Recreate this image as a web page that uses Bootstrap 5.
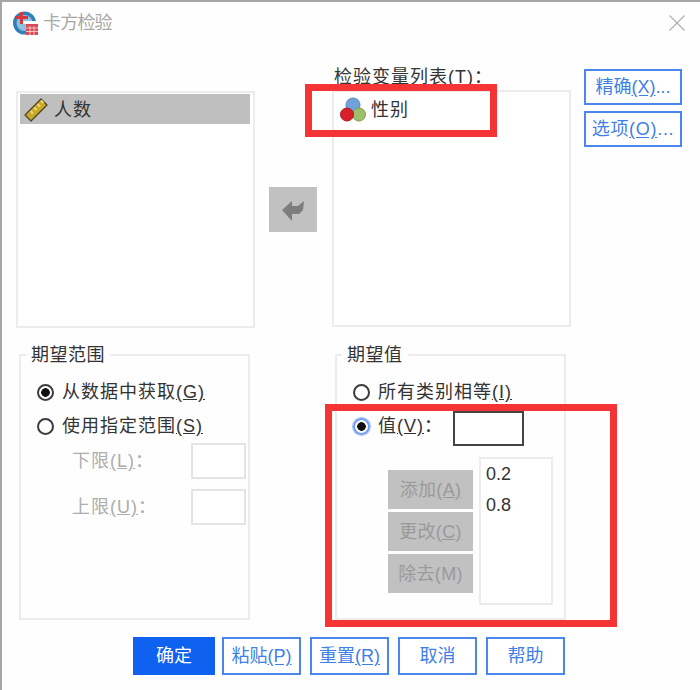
<!DOCTYPE html>
<html lang="zh">
<head>
<meta charset="utf-8">
<title>卡方检验</title>
<link rel="stylesheet" href="https://cdn.jsdelivr.net/npm/bootstrap@5.3.0/dist/css/bootstrap.min.css">
<style>
html,body{background:#fff;margin:0;height:690px;overflow:hidden}
body{font-family:"Liberation Sans","Noto Sans CJK SC",sans-serif;font-size:18px;color:#333;line-height:24px}
.dlg{position:relative;width:700px;height:690px;border-top:2px solid #a6a6a6;border-left:2px solid #a6a6a6;background:#fefefe}
.tbar{height:42px;padding-left:11px;padding-right:15px;color:#a8a8a8;letter-spacing:-.8px;font-size:18px}
.tbar .ttl{margin-left:5px}
.upper{height:299px}
.lst{border:2px solid #ececec;background:#fff;width:239px;height:237px;padding:1px 3px 3px 2px}
.sel{background:#bfbfbf;height:30px;padding-left:3px;gap:5px;letter-spacing:1px;color:#333}
.sel span{margin-top:1px}
.upper .col-l{margin-left:14px;margin-top:47px}
.mover{width:48px;height:45px;margin:143px 15px 0 14px;background:#c1c1c1;border:0;border-radius:0;padding:0}
.lbl{height:25px;letter-spacing:1px;margin-left:2px;margin-top:21px;margin-bottom:0;white-space:nowrap;color:#333}
.var{height:34px;padding-left:4px;gap:5px;letter-spacing:1px;color:#333;margin-top:0}
.side{margin-left:13px;margin-top:25px;gap:6px}
.bt{border:2px solid #4a86ec;border-radius:0;background:#fff;color:#3f7fe8;font-size:18px;line-height:22px;padding:0;white-space:nowrap}
.bt:hover{background:#fff;color:#3f7fe8;border-color:#4a86ec}
.bt u{text-underline-offset:2px}
.side .bt{width:98px;height:36px}
.side .wide{letter-spacing:.7px}
.lower{height:294px;padding-left:17px;gap:85px}
.grp{width:231px;height:277px;border:2px solid #ececec;margin:0;padding:0 0 0 16px;min-width:0}
.grp legend{float:none;width:auto;font-size:18px;line-height:24px;margin:0 0 8px -11px;padding:0 5px;letter-spacing:.5px;color:#333;height:24px}
.rw{height:34px;gap:8px;letter-spacing:1px;white-space:nowrap;color:#333}
.rad{width:17px;height:17px;margin:0;flex:none;border:2px solid #3c3c3c;border-radius:50%;appearance:none;background:#fff}
.rad:checked{background:radial-gradient(circle,#111 0 4px,#fff 4.6px)}
.rad.foc{border-color:#6f9fee;box-shadow:0 0 0 1px #a8c5f4}
.off{color:#adadad;letter-spacing:1px}
.bx{border:2px solid #e4e4e4;background:#fff;height:36px;width:55px;border-radius:0;padding:0;display:block}
.lim{height:46px;padding-left:35px;padding-right:2px}
.lim.first{margin-top:-5px}
.bx.act{border-color:#444;width:71px;height:35px;margin-left:2px;margin-top:5px}
.pick{width:85px;gap:3px;margin-top:27px;margin-left:35px}
.grey{background:#c1c1c1;color:#9a9a9a;border:0;border-radius:0;height:39px;font-size:18px;padding:0;white-space:nowrap;line-height:22px;letter-spacing:.3px}
.grey:disabled{background:#c1c1c1;color:#9a9a9a;opacity:1}
.vals{width:74px;height:148px;border:2px solid #ececec;background:#fff;padding:0 0 0 5px;line-height:31px;margin:14px 0 0 6px;color:#333}
.foot{padding-left:131px;gap:9px}
.foot .bt{height:38px;width:79px}
.foot .pri{width:82px;background:#0f62f0;border-color:#0f62f0;color:#fff;margin-right:-2px}
.foot .pri:hover{background:#0f62f0;border-color:#0f62f0;color:#fff}
.rbox{position:absolute;border:7px solid #f53535;pointer-events:none}
.rb1{left:303px;top:82px;width:192px;height:53px}
.rb2{left:323px;top:402px;width:292px;height:223px}
.xicon{width:16px;height:16px}
</style>
</head>
<body>
<div class="dlg">
  <div class="tbar d-flex align-items-center">
    <svg width="25" height="25" viewBox="0 0 25 25" aria-hidden="true">
      <circle cx="11.5" cy="12" r="11.5" fill="#2f7fb8"/>
      <circle cx="11.5" cy="12" r="8" fill="#8fbfe0"/>
      <rect x="10" y="10" width="13" height="3" fill="#fff"/>
      <rect x="7" y="1" width="3" height="12" fill="#d9363e"/>
      <rect x="2" y="5" width="13" height="3" fill="#d9363e"/>
      <rect x="13" y="13" width="12" height="11" fill="#d84a56"/>
      <path d="M13 17h12M13 20.500h12M17 15v9M21 15v9" stroke="#f3c0c4" stroke-width="1"/>
    </svg>
    <span class="ttl">卡方检验</span>
    <svg class="xicon ms-auto" viewBox="0 0 16 16" aria-hidden="true"><path d="M.5.5l15 15M15.500.5l-15 15" stroke="#b0b0b0" stroke-width="1.200" fill="none"/></svg>
  </div>

  <div class="upper d-flex align-items-start">
    <div class="col-l">
      <div class="lst">
        <div class="sel d-flex align-items-center">
          <svg width="26" height="26" viewBox="0 0 26 26" aria-hidden="true">
            <path d="M2 19L18 3l6 6L8 25z" fill="#c9a92a" stroke="#4e4620" stroke-width="1.300" stroke-linejoin="round"/>
            <path d="M7.500 15l2.500 2.500M11 11.500l2.500 2.500M14.500 8l2.500 2.500M18 4.500l2.500 2.500" stroke="#e8dc70" stroke-width="2"/>
          </svg>
          <span>人数</span>
        </div>
      </div>
    </div>
    <button class="btn mover d-flex align-items-center justify-content-center" type="button" aria-label="移动">
      <svg width="26" height="24" viewBox="0 0 26 24" aria-hidden="true"><path d="M2 12l10-9v5h6l6-5-1 9-4 4h-7v7z" fill="#7d7d7d"/></svg>
    </button>
    <div>
      <div class="lbl">检验变量列表<u>(T)</u>：</div>
      <div class="lst">
        <div class="var d-flex align-items-center">
          <svg width="26" height="26" viewBox="0 0 26 26" aria-hidden="true">
            <circle cx="13" cy="8" r="7" fill="#6ea3dc" stroke="#5a85b8"/>
            <circle cx="19" cy="17.500" r="6.500" fill="#9cc06a" stroke="#7b9c50"/>
            <circle cx="7" cy="17.500" r="6.500" fill="#d8202a" stroke="#a81a20"/>
          </svg>
          <span>性别</span>
        </div>
      </div>
    </div>
    <div class="side d-flex flex-column">
      <button class="btn bt" type="button">精确<u>(X)</u>...</button>
      <button class="btn bt wide" type="button">选项<u>(O)</u>...</button>
    </div>
  </div>

  <div class="lower d-flex align-items-start">
    <fieldset class="grp">
      <legend>期望范围</legend>
      <div class="rw d-flex align-items-center"><input class="rad" type="radio" name="r1" checked aria-label="从数据中获取"><span>从数据中获取<u>(G)</u></span></div>
      <div class="rw d-flex align-items-center"><input class="rad" type="radio" name="r1" aria-label="使用指定范围"><span>使用指定范围<u>(S)</u></span></div>
      <div class="lim first d-flex align-items-center justify-content-between"><span class="off">下限<u>(L)</u>：</span><input class="bx" disabled aria-label="下限"></div>
      <div class="lim d-flex align-items-center justify-content-between"><span class="off">上限<u>(U)</u>：</span><input class="bx" disabled aria-label="上限"></div>
    </fieldset>
    <fieldset class="grp">
      <legend>期望值</legend>
      <div class="rw d-flex align-items-center"><input class="rad" type="radio" name="r2" aria-label="所有类别相等"><span>所有类别相等<u>(I)</u></span></div>
      <div class="rw d-flex align-items-center"><input class="rad foc" type="radio" name="r2" checked aria-label="值"><span>值<u>(V)</u>：</span><input class="bx act" aria-label="值"></div>
      <div class="d-flex align-items-start">
        <div class="pick d-flex flex-column">
          <button class="btn grey" type="button" disabled>添加<u>(A)</u></button>
          <button class="btn grey" type="button" disabled>更改<u>(C)</u></button>
          <button class="btn grey" type="button" disabled>除去(M)</button>
        </div>
        <div class="vals">0.2<br>0.8</div>
      </div>
    </fieldset>
  </div>

  <div class="foot d-flex">
    <button class="btn bt pri" type="button">确定</button>
    <button class="btn bt" type="button">粘贴<u>(P)</u></button>
    <button class="btn bt" type="button">重置<u>(R)</u></button>
    <button class="btn bt" type="button">取消</button>
    <button class="btn bt" type="button">帮助</button>
  </div>

  <div class="rbox rb1"></div>
  <div class="rbox rb2"></div>
</div>
</body>
</html>
